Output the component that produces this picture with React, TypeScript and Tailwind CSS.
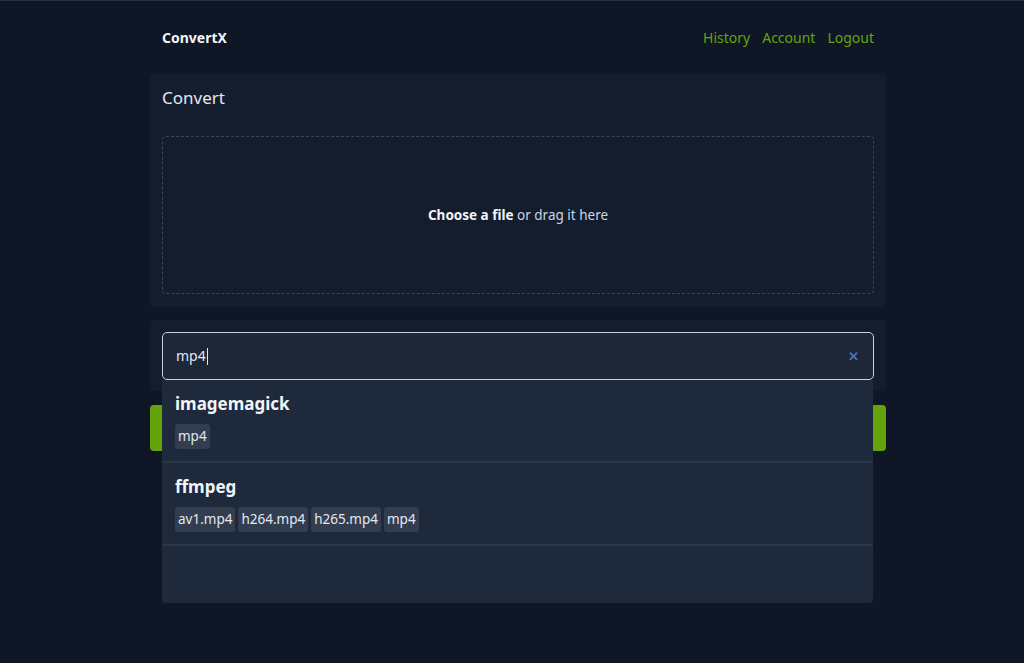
const converters = [
  { name: "imagemagick", targets: ["mp4"] },
  { name: "ffmpeg", targets: ["av1.mp4", "h264.mp4", "h265.mp4", "mp4"] },
];

export default function App() {
  return (
    <div
      className="min-h-[663px] border-t border-[#283244] bg-[#0f1727] text-slate-200"
      style={{ fontFamily: '"Noto Sans", "Open Sans", sans-serif' }}
    >
      <div className="ml-[150px] w-[736px]">
        <header className="flex h-[73px] items-center justify-between px-3">
          <span className="text-sm font-bold text-slate-100">ConvertX</span>
          <nav className="flex gap-3 text-sm text-[#65a30d]">
            <a>History</a>
            <a>Account</a>
            <a>Logout</a>
          </nav>
        </header>

        <section className="rounded bg-[#141d2e] px-3 pb-[13px] pt-3">
          <h2 className="mb-[26px] h-[24px] text-[17px] leading-[24px] text-slate-200">Convert</h2>
          <div className="flex h-[158px] items-center justify-center rounded border border-dashed border-[#3a4557] text-[13.5px] text-slate-300">
            <span className="font-bold text-slate-100">Choose a file</span>
            <span>&nbsp;or drag it here</span>
          </div>
        </section>

        <section className="relative mt-[13px]">
          <div className="rounded bg-[#141d2e] px-3 pb-[11px] pt-3">
            <div className="flex h-[48px] items-center justify-between rounded-[5px] border border-[#c9d1dc] bg-[#1d2738] pl-[13px] pr-[14px] text-sm">
              <span className="flex items-center text-slate-200">
                mp4<span className="ml-[1px] inline-block h-[17px] w-px bg-slate-200" />
              </span>
              <span className="text-[13px] font-bold text-[#4a72b8]">✕</span>
            </div>
          </div>

          <button className="mt-[14px] h-[46px] w-full rounded bg-[#65a30d]" />

          <div className="absolute left-3 right-[13px] top-[60px] h-[223px] rounded-b bg-[#1e293b]">
            {converters.map((c) => (
              <div key={c.name} className="h-[83px] border-b-2 border-[#2a3648] px-[13px] pt-[13px]">
                <div className="text-[17px] font-bold leading-[22px] text-slate-100">{c.name}</div>
                <div className="mt-[9px] flex gap-[3px]">
                  {c.targets.map((t) => (
                    <span
                      key={t}
                      className="flex h-[25px] items-center rounded-[3px] bg-[#323d4f] px-[3px] text-[13.5px] text-slate-200"
                    >
                      {t}
                    </span>
                  ))}
                </div>
              </div>
            ))}
          </div>
        </section>
      </div>
    </div>
  );
}
